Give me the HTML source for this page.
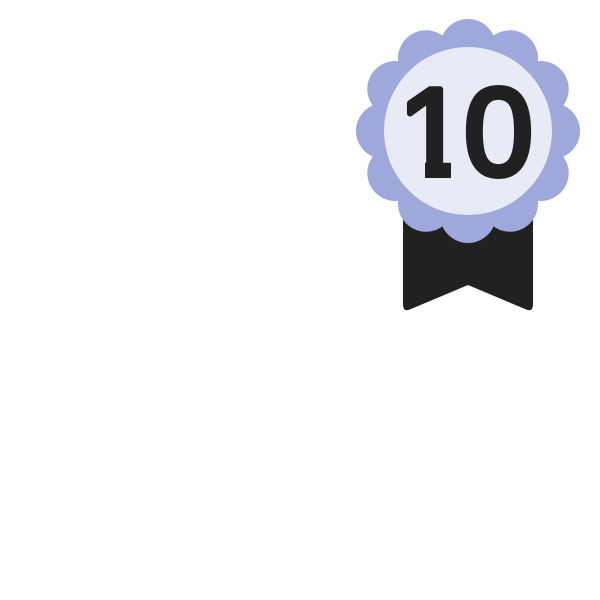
<!DOCTYPE html>
<html><head><style>html,body{margin:0;padding:0;background:#fff;width:600px;height:600px;overflow:hidden}</style></head>
<body>
<svg width="600" height="600" viewBox="0 0 600 600" xmlns="http://www.w3.org/2000/svg">
<defs>
<clipPath id="c1">
<rect x="380" y="60" width="80" height="95"/>
<rect x="425" y="150" width="26" height="40" rx="9"/>
</clipPath>
</defs>
<path d="M409 200 L527 200 Q533 200 533 206 L533 304 Q533 313 525 309 L468 285 L411 309 Q403 313 403 304 L403 206 Q403 200 409 200 Z" fill="#212121"/>
<g fill="#9fa8da" transform="translate(468,131)">
<circle r="88"/>
<circle cx="0" cy="-84" r="28"/><circle cx="42" cy="-72.7" r="28"/><circle cx="72.7" cy="-42" r="28"/>
<circle cx="84" cy="0" r="28"/><circle cx="72.7" cy="42" r="28"/><circle cx="42" cy="72.7" r="28"/>
<circle cx="0" cy="84" r="28"/><circle cx="-42" cy="72.7" r="28"/><circle cx="-72.7" cy="42" r="28"/>
<circle cx="-84" cy="0" r="28"/><circle cx="-72.7" cy="-42" r="28"/><circle cx="-42" cy="-72.7" r="28"/>
</g>
<circle cx="468" cy="131" r="84" fill="#e8eaf6"/>
<g font-family="Liberation Sans, sans-serif" font-size="124" fill="#212121" stroke="#212121" stroke-width="6" stroke-linejoin="round" stroke-linecap="round">
<text x="398" y="175" clip-path="url(#c1)">1</text>
<text x="464" y="175">0</text>
</g>
</svg>
</body></html>
